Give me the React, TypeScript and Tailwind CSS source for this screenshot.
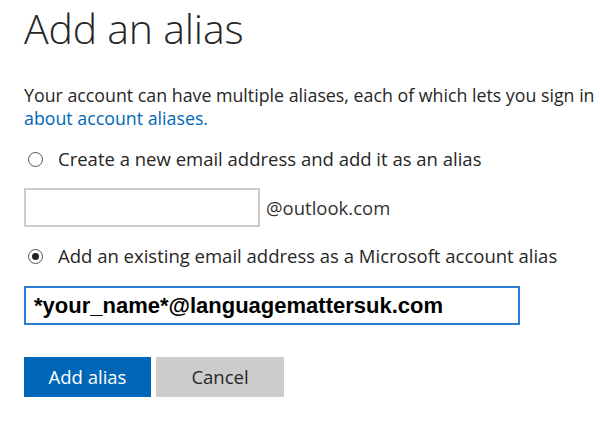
import { useState } from 'react';

export default function App() {
  const [choice, setChoice] = useState<'new' | 'existing'>('existing');
  const [newName, setNewName] = useState('');
  const [existing, setExisting] = useState('*your_name*@languagemattersuk.com');

  return (
    <div className="w-[600px] h-[431px] overflow-hidden bg-white">
      <div className="pl-[24px] pt-[2px] text-[#262626] font-['Open_Sans',sans-serif]">
        <h1 className="text-[41px] font-light leading-[52px] tracking-[-0.2px]">Add an alias</h1>

        <p className="mt-[30px] text-[17.8px] leading-[23px] whitespace-nowrap">
          Your account can have multiple aliases, each of which lets you sign in
          <br />
          <a href="#" className="text-[#0067b8]">about account aliases.</a>
        </p>

        <label className="mt-[17px] flex items-center gap-[15px] cursor-pointer">
          <span className="ml-[4px] w-[15px] h-[15px] rounded-full border border-[#555] flex items-center justify-center">
            {choice === 'new' && <span className="w-[7px] h-[7px] rounded-full bg-[#222]" />}
          </span>
          <input type="radio" className="hidden" checked={choice === 'new'} onChange={() => setChoice('new')} />
          <span className="text-[18.5px] leading-[24px]">Create a new email address and add it as an alias</span>
        </label>

        <div className="mt-[17px] flex items-center gap-[6px]">
          <input
            value={newName}
            onChange={e => setNewName(e.target.value)}
            className="w-[236px] h-[39px] border-2 border-[#cccccc] px-2 outline-none"
          />
          <span className="text-[18.5px] text-[#333]">@outlook.com</span>
        </div>

        <label className="mt-[17px] flex items-center gap-[15px] cursor-pointer">
          <span className="ml-[4px] w-[15px] h-[15px] rounded-full border border-[#555] flex items-center justify-center">
            {choice === 'existing' && <span className="w-[7px] h-[7px] rounded-full bg-[#222]" />}
          </span>
          <input type="radio" className="hidden" checked={choice === 'existing'} onChange={() => setChoice('existing')} />
          <span className="text-[18.5px] leading-[24px]">Add an existing email address as a Microsoft account alias</span>
        </label>

        <input
          value={existing}
          onChange={e => setExisting(e.target.value)}
          className="mt-[18px] block w-[496px] h-[39px] border-2 border-[#2a7fd4] px-[8px] outline-none text-[22px] font-bold text-black font-['Liberation_Sans',sans-serif]"
        />

        <div className="mt-[32px] flex gap-[5px]">
          <button className="w-[127px] h-[40px] bg-[#0067b8] text-white text-[18.5px]">Add alias</button>
          <button className="w-[128px] h-[40px] bg-[#cccccc] text-[#262626] text-[18.5px]">Cancel</button>
        </div>
      </div>
    </div>
  );
}
